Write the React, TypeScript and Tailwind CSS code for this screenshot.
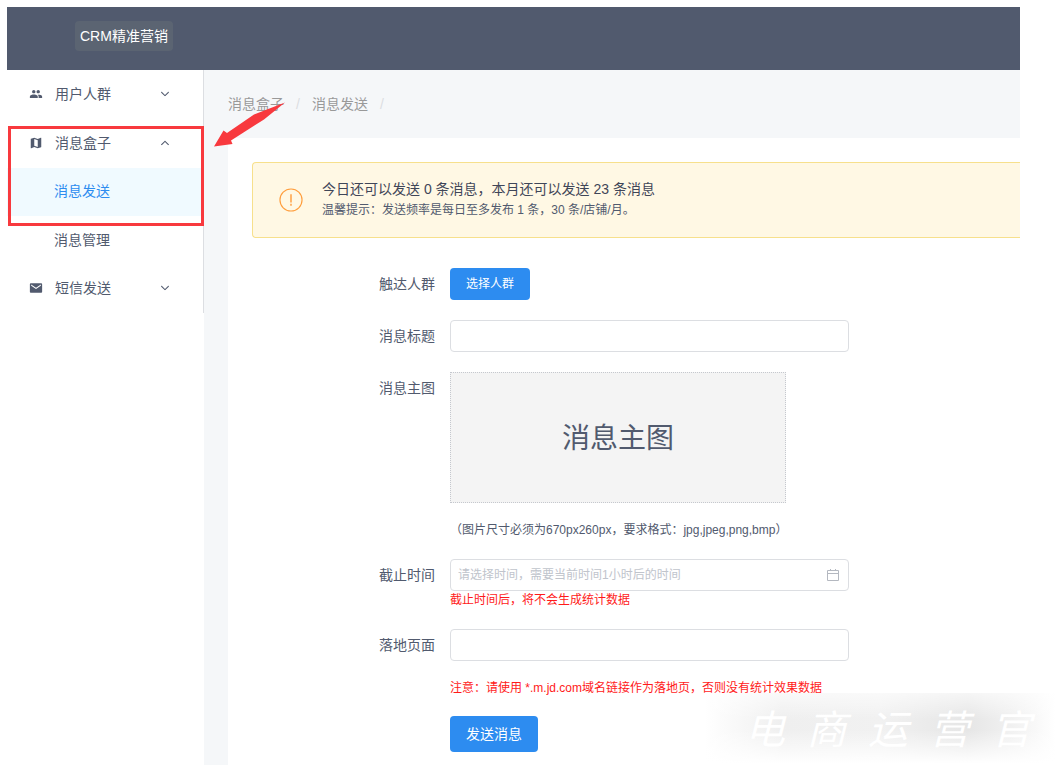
import type { ReactNode } from 'react';
import { IoIosArrowDown, IoIosArrowUp, IoMdMail, IoMdMap, IoMdPeople } from 'react-icons/io';

interface MenuEntry {
  label: string;
  icon: ReactNode;
  open?: boolean;
  children?: { label: string; active?: boolean }[];
}

const menu: MenuEntry[] = [
  { label: '用户人群', icon: <IoMdPeople /> },
  {
    label: '消息盒子',
    icon: <IoMdMap />,
    open: true,
    children: [{ label: '消息发送', active: true }, { label: '消息管理' }],
  },
  { label: '短信发送', icon: <IoMdMail /> },
];

const inputClass =
  'block h-8 w-full rounded border border-[#dcdee2] bg-white px-[7px] text-xs text-[#515a6e] outline-none placeholder:text-[#c0c4cc]';

function Sidebar() {
  return (
    <nav className="relative w-[197px] shrink-0 bg-white">
      <ul className="border-r border-[#dcdee2] text-sm text-[#515a6e]">
        {menu.map((entry) => (
          <li key={entry.label}>
            <button type="button" className="flex h-[49px] w-full items-center pr-8 pb-0.5 pl-[22px]">
              <span className="w-[26px] text-sm">{entry.icon}</span>
              <span className="flex-1 text-left">{entry.label}</span>
              {entry.open ? (
                <IoIosArrowUp className="text-xs" />
              ) : (
                <IoIosArrowDown className="text-xs" />
              )}
            </button>
            {entry.children && (
              <ul>
                {entry.children.map((child) => (
                  <li key={child.label}>
                    <a
                      href="#"
                      className={
                        child.active
                          ? 'flex h-12 items-center bg-[#f0faff] pb-0.5 pl-[47px] text-[#2d8cf0]'
                          : 'flex h-12 items-center pl-[47px]'
                      }
                    >
                      {child.label}
                    </a>
                  </li>
                ))}
              </ul>
            )}
          </li>
        ))}
      </ul>

      {/* Highlight frame and arrow */}
      <div className="pointer-events-none absolute top-14 left-px h-[100px] w-[196px] border-3 border-[#f8393e]" />
      <svg
        className="pointer-events-none absolute top-8 left-[207px]"
        width="72"
        height="46"
        viewBox="0 0 72 46"
        aria-hidden="true"
      >
        <path d="M0 44.5 L9.500 28.500 L13 31 L40 12.500 L71 0.5 L50 17.500 L17 38.500 L18.500 42 Z" fill="#f8393e" />
      </svg>
    </nav>
  );
}

function Notice() {
  return (
    <div className="flex h-[76px] items-center rounded-l border border-r-0 border-[#f7e08c] bg-[#fff8e4] pl-[26px]">
      <svg width="24" height="24" viewBox="0 0 25 25" fill="none" stroke="#ff9e3d" aria-hidden="true">
        <circle cx="12.500" cy="12.500" r="11.500" strokeWidth="1.200" />
        <path d="M12.500 6.500v8.500M12.500 16.500v2" strokeWidth="1.500" />
      </svg>
      <div className="ml-[19px] pb-0.5">
        <p className="text-sm leading-[22px] text-[#3f4658]">
          今日还可以发送 0 条消息，本月还可以发送 23 条消息
        </p>
        <p className="text-xs leading-[20px] text-[#515a6e]">
          温馨提示：发送频率是每日至多发布 1 条，30 条/店铺/月。
        </p>
      </div>
    </div>
  );
}

function Row({ label, htmlFor, children }: { label: string; htmlFor: string; children: ReactNode }) {
  return (
    <div className="flex gap-[15px]">
      <label htmlFor={htmlFor} className="w-[183px] shrink-0 text-right text-sm leading-8">
        {label}
      </label>
      <div className="max-w-[399px] flex-1">{children}</div>
    </div>
  );
}

function MessageForm() {
  return (
    <form className="mt-[30px] flex flex-col gap-5 text-[#515a6e]" onSubmit={(e) => e.preventDefault()}>
      <Row label="触达人群" htmlFor="crowd">
        <button id="crowd" type="button" className="block h-8 rounded bg-[#2d8cf0] px-4 text-xs text-white">
          选择人群
        </button>
      </Row>

      <Row label="消息标题" htmlFor="title">
        <input id="title" type="text" className={inputClass} />
      </Row>

      <Row label="消息主图" htmlFor="cover">
        <button
          id="cover"
          type="button"
          className="flex h-[131px] w-full max-w-[336px] items-center justify-center border border-dotted border-[#c5c8ce] bg-[#f4f4f4] pt-0.5 text-[28px]"
        >
          消息主图
        </button>
        <p className="mt-[18px] text-xs leading-[18px]">
          （图片尺寸必须为670px260px，要求格式：jpg,jpeg,png,bmp）
        </p>
      </Row>

      <Row label="截止时间" htmlFor="deadline">
        <div className="relative">
          <input
            id="deadline"
            type="text"
            placeholder="请选择时间，需要当前时间1小时后的时间"
            className={inputClass}
          />
          <svg
            className="absolute top-[9px] right-[9px]"
            width="14"
            height="14"
            viewBox="0 0 14 14"
            fill="none"
            stroke="#b4b8c0"
            aria-hidden="true"
          >
            <path d="M1.500 2.500h11v10h-11zM1.500 5.500h11M4.500 1v1.500M9.500 1v1.500" />
          </svg>
        </div>
        <p className="text-xs leading-[18px] text-[#ff1a1a]">截止时间后，将不会生成统计数据</p>
      </Row>

      <Row label="落地页面" htmlFor="landing">
        <input id="landing" type="text" className={inputClass} />
        <p className="mt-[18px] text-xs leading-[18px] text-[#ff1a1a]">
          注意：请使用 *.m.jd.com域名链接作为落地页，否则没有统计效果数据
        </p>
        <button type="submit" className="mt-[19px] block h-9 rounded bg-[#2d8cf0] px-4 text-sm text-white">
          发送消息
        </button>
      </Row>
    </form>
  );
}

function Watermark() {
  return (
    <div className="pointer-events-none absolute right-0 bottom-0 flex h-[74px] w-[350px] items-center justify-between bg-[linear-gradient(to_bottom,#ffffffa0,transparent_35%,transparent_50%,white_95%),linear-gradient(to_right,white,#efefef_22%,#f1f1f1_50%,#e6e6e6_75%,#f1f1f1_88%,white)] pr-6 pl-10 text-[40px] text-white italic">
      {['电', '商', '运', '营', '官'].map((char) => (
        <span key={char}>{char}</span>
      ))}
    </div>
  );
}

export default function App() {
  return (
    <div className="relative flex min-h-screen flex-col bg-white pt-[7px] pr-[35px] pb-0.5 pl-[7px] font-['Liberation_Sans','Noto_Sans_CJK_SC',sans-serif]">
      <header className="flex h-[63px] items-center bg-[#515a6e] pb-1.5 pl-[68px]">
        <h1 className="rounded-sm bg-[#5b6472] px-[5px] text-sm leading-[30px] text-white">CRM精准营销</h1>
      </header>
      <div className="flex flex-1">
        <Sidebar />
        <div className="flex flex-1 flex-col bg-[#f5f7f9] pl-6">
          <div className="flex h-[68px] items-center gap-3 text-sm text-[#999]">
            <a href="#">消息盒子</a>
            <span className="text-[#dcdee2]">/</span>
            <a href="#">消息发送</a>
            <span className="text-[#dcdee2]">/</span>
          </div>
          <main className="flex-1 bg-white pt-6 pb-3 pl-6">
            <Notice />
            <MessageForm />
          </main>
        </div>
      </div>
      <Watermark />
    </div>
  );
}
